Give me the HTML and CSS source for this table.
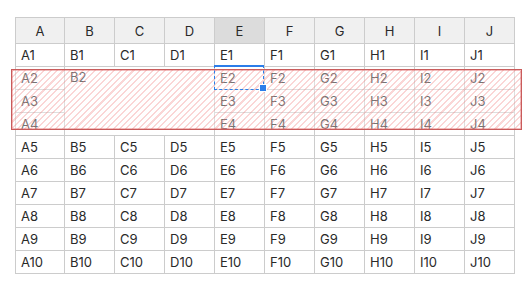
FILE: index.html
```html
<!DOCTYPE html>
<html lang="en">

<head>
    <meta charset="UTF-8">
    <meta name="viewport" content="width=device-width, initial-scale=1.0">
    <title>Sheet</title>
    <link rel="stylesheet" href="styles.css">
</head>

<body>
    <div class="sheet">
        <div class="grid">
            <div class="head">A</div><div class="head">B</div><div class="head">C</div><div class="head">D</div><div class="head current">E</div><div class="head">F</div><div class="head">G</div><div class="head">H</div><div class="head">I</div><div class="head">J</div>

            <div class="cell">A1</div><div class="cell">B1</div><div class="cell">C1</div><div class="cell">D1</div><div class="cell">E1</div><div class="cell">F1</div><div class="cell">G1</div><div class="cell">H1</div><div class="cell">I1</div><div class="cell">J1</div>

            <div class="cell">A2</div><div class="cell merged">B2</div><div class="cell active">E2</div><div class="cell">F2</div><div class="cell">G2</div><div class="cell">H2</div><div class="cell">I2</div><div class="cell">J2</div>
            <div class="cell">A3</div><div class="cell">E3</div><div class="cell">F3</div><div class="cell">G3</div><div class="cell">H3</div><div class="cell">I3</div><div class="cell">J3</div>
            <div class="cell">A4</div><div class="cell">E4</div><div class="cell">F4</div><div class="cell">G4</div><div class="cell">H4</div><div class="cell">I4</div><div class="cell">J4</div>

            <div class="cell">A5</div><div class="cell">B5</div><div class="cell">C5</div><div class="cell">D5</div><div class="cell">E5</div><div class="cell">F5</div><div class="cell">G5</div><div class="cell">H5</div><div class="cell">I5</div><div class="cell">J5</div>
            <div class="cell">A6</div><div class="cell">B6</div><div class="cell">C6</div><div class="cell">D6</div><div class="cell">E6</div><div class="cell">F6</div><div class="cell">G6</div><div class="cell">H6</div><div class="cell">I6</div><div class="cell">J6</div>
            <div class="cell">A7</div><div class="cell">B7</div><div class="cell">C7</div><div class="cell">D7</div><div class="cell">E7</div><div class="cell">F7</div><div class="cell">G7</div><div class="cell">H7</div><div class="cell">I7</div><div class="cell">J7</div>
            <div class="cell">A8</div><div class="cell">B8</div><div class="cell">C8</div><div class="cell">D8</div><div class="cell">E8</div><div class="cell">F8</div><div class="cell">G8</div><div class="cell">H8</div><div class="cell">I8</div><div class="cell">J8</div>
            <div class="cell">A9</div><div class="cell">B9</div><div class="cell">C9</div><div class="cell">D9</div><div class="cell">E9</div><div class="cell">F9</div><div class="cell">G9</div><div class="cell">H9</div><div class="cell">I9</div><div class="cell">J9</div>
            <div class="cell">A10</div><div class="cell">B10</div><div class="cell">C10</div><div class="cell">D10</div><div class="cell">E10</div><div class="cell">F10</div><div class="cell">G10</div><div class="cell">H10</div><div class="cell">I10</div><div class="cell">J10</div>
        </div>

        <!-- highlighted range over rows 2-4 -->
        <div class="range"></div>
    </div>
</body>
</html>
```

FILE: styles.css
```css
* {
    margin: 0;
    padding: 0;
    box-sizing: border-box;
}

body {
    width: 100vw;
    height: 100vh;
    background: #fff;
    font-family: "Inter", "Liberation Sans", sans-serif;
    font-size: 13px;
    color: #2a2a2a;
    overflow: hidden;
}

.sheet {
    position: relative;
    margin: 17px 0 0 15px;
    width: 500px;
}

.grid {
    display: grid;
    grid-template-columns: 49px repeat(9, 50px);
    grid-template-rows: 26px;
    grid-auto-rows: 23px;
    border-top: 1px solid #ccc;
    border-left: 1px solid #ccc;
}

.head,
.cell {
    border-right: 1px solid #ccc;
    border-bottom: 1px solid #ccc;
    display: flex;
    align-items: center;
}

.head {
    justify-content: center;
    background: #f0f0f0;
}

.head.current {
    background: #dcdcdc;
}

.cell {
    padding: 0 5px;
    position: relative;
}

.merged {
    grid-column: span 3;
    grid-row: span 3;
    align-items: flex-start;
    padding-top: 2px;
}

/* selected cell with fill handle */
.active::after {
    content: "";
    position: absolute;
    left: -1px;
    top: -2px;
    right: 0;
    bottom: -1px;
    border: 1.5px dashed #2b7de9;
    border-top: 2px solid #2b7de9;
    z-index: 3;
}

.active::before {
    content: "";
    position: absolute;
    right: -3px;
    bottom: -3px;
    width: 6px;
    height: 6px;
    background: #2b7de9;
    border: 1px solid #fff;
    z-index: 4;
}

.range {
    position: absolute;
    left: -4px;
    top: 52px;
    width: 511px;
    height: 61px;
    border: 1px solid #c95b5b;
    box-shadow: inset 0 0 0 1px rgba(225, 110, 110, 0.45);
    background-color: rgba(255, 255, 255, 0.35);
    background-image: repeating-linear-gradient(135deg,
            rgba(240, 120, 120, 0.3) 0,
            rgba(240, 120, 120, 0.3) 1.5px,
            transparent 1.5px,
            transparent 4.5px);
    z-index: 2;
}
```
